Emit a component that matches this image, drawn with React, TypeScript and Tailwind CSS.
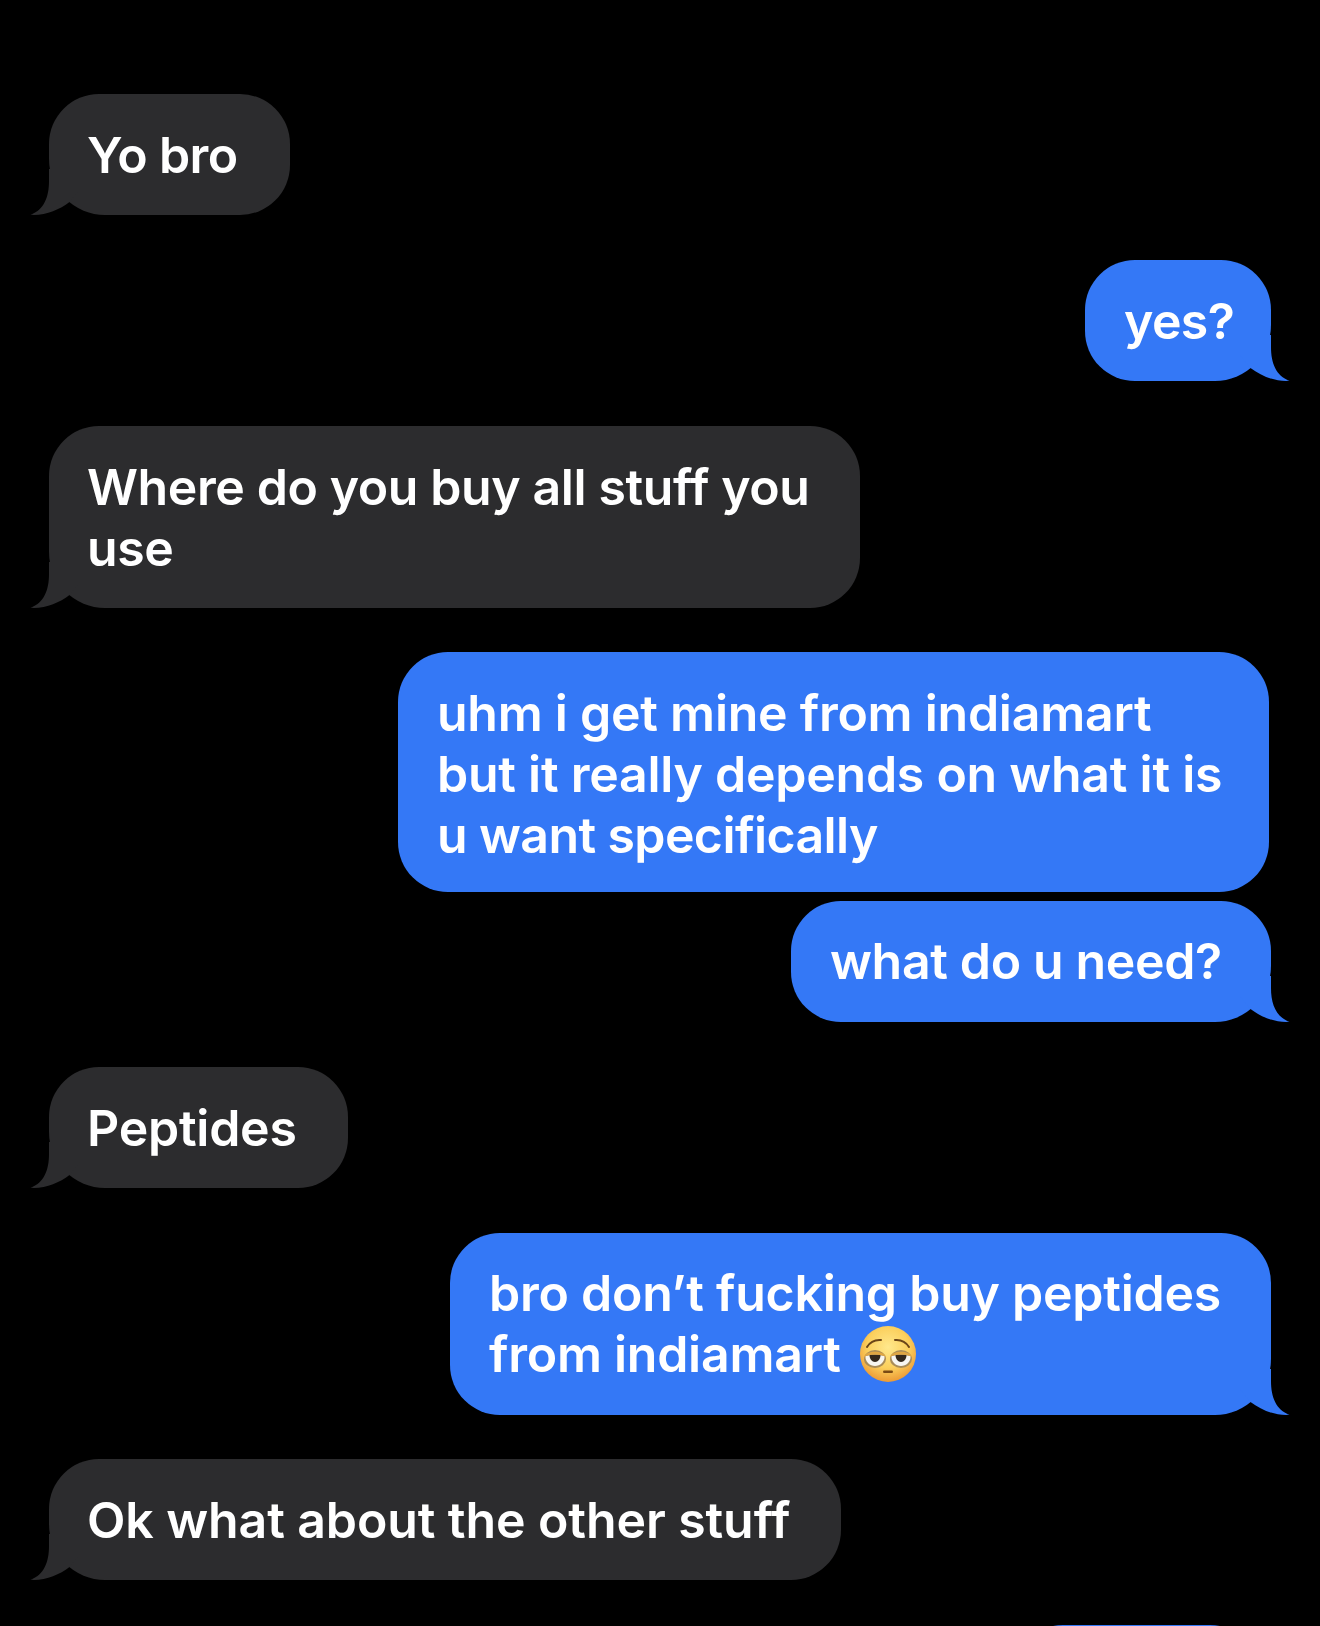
import React from 'react';

const Tail = ({ side, color }: { side: 'left' | 'right'; color: string }) => (
  <svg
    viewBox="0 0 50 46"
    className={side === 'left' ? 'absolute bottom-0 left-[-19px] w-[50px] h-[46px]' : 'absolute bottom-0 right-[-19px] w-[50px] h-[46px] -scale-x-100'}
  >
    <path d="M19 0 L19 12 C19 28 14 41 0.5 45.8 C15 46.8 29 41 39.5 33 L50 20 L50 0 Z" fill={color} />
  </svg>
);

// hand drawn, no emoji font in the sandbox
const FaceEmoji = () => (
  <svg viewBox="0 0 56 56" className="inline-block w-[56px] h-[56px] ml-[19px] align-[-10px]">
    <defs>
      <radialGradient id="face" cx="50%" cy="38%" r="62%">
        <stop offset="0%" stopColor="#ffe88c" />
        <stop offset="60%" stopColor="#fbcf5c" />
        <stop offset="100%" stopColor="#ec9a35" />
      </radialGradient>
    </defs>
    <circle cx="28" cy="28" r="28" fill="url(#face)" />
    <path d="M7 21 C10 16 15 13.5 21 14" fill="none" stroke="#6b4518" strokeWidth="2" strokeLinecap="round" />
    <path d="M49 21 C46 16 41 13.5 35 14" fill="none" stroke="#6b4518" strokeWidth="2" strokeLinecap="round" />
    <ellipse cx="15" cy="33" rx="11" ry="9" fill="#a98c58" />
    <ellipse cx="41" cy="33" rx="11" ry="9" fill="#a98c58" />
    <path d="M5.5 30 C9 28.5 21 28.5 24.5 30 C25 36 20 40 15 40 C10 40 5 36 5.5 30 Z" fill="#f8f6f0" />
    <path d="M31.5 30 C35 28.5 47 28.5 50.5 30 C51 36 46 40 41 40 C36 40 31 36 31.5 30 Z" fill="#f8f6f0" />
    <path d="M9.5 29 L20.5 29 C20.5 33 18 36 15 36 C12 36 9.5 33 9.5 29 Z" fill="#33281c" />
    <path d="M35.5 29 L46.5 29 C46.5 33 44 36 41 36 C38 36 35.5 33 35.5 29 Z" fill="#33281c" />
    <path d="M4 31 C6 24 24 24 26 31 C22 27.5 8 27.5 4 31 Z" fill="#e0a642" />
    <path d="M30 31 C32 24 50 24 52 31 C48 27.5 34 27.5 30 31 Z" fill="#e0a642" />
    <rect x="23" y="44.5" width="10" height="2.6" rx="1.3" fill="#7a4a14" />
  </svg>
);

const Bubble = ({ side, tail = true, className, children }: { side: 'left' | 'right'; tail?: boolean; className: string; children?: React.ReactNode }) => {
  const color = side === 'left' ? '#2c2c2e' : '#3478f6';
  return (
    <div className={`relative rounded-[50px] text-white whitespace-nowrap ${side === 'left' ? 'self-start ml-[49px] bg-[#2c2c2e] pl-[38px]' : 'self-end bg-[#3478f6] pl-[39px]'} ${tail && side === 'left' ? 'rounded-bl-[56px]' : ''} ${tail && side === 'right' ? 'rounded-br-[56px]' : ''} ${className}`}>
      {tail && <Tail side={side} color={color} />}
      <div className="relative">{children}</div>
    </div>
  );
};

export default function App() {
  return (
    <div className="h-[1626px] w-[1320px] overflow-hidden bg-black pt-[94px] flex flex-col font-['Inter',sans-serif] font-[560] text-[50px] leading-[61px] tracking-[-0.25px] [font-variant-ligatures:none]">
      <Bubble side="left" className="w-[241px] pt-[31px] pb-[29px] tracking-[-0.6px]">Yo bro</Bubble>
      <Bubble side="right" className="w-[186px] mr-[49px] mt-[45px] pt-[31px] pb-[29px] tracking-[-0.6px]">yes?</Bubble>
      <Bubble side="left" className="w-[811px] mt-[45px] pt-[31px] pb-[29px] tracking-[-0.4px]">Where do you buy all stuff you<br />use</Bubble>
      <Bubble side="right" tail={false} className="w-[871px] mr-[51px] mt-[44px] pt-[31px] pb-[26px]">uhm i get mine from indiamart<br />but it really depends on what it is<br /><span className="tracking-[-0.6px]">u want specifically</span></Bubble>
      <Bubble side="right" className="w-[480px] mr-[49px] mt-[9px] pt-[30px] pb-[30px] tracking-[-0.35px]">what do u need?</Bubble>
      <Bubble side="left" className="w-[299px] mt-[45px] pt-[31px] pb-[29px]">Peptides</Bubble>
      <Bubble side="right" className="w-[821px] mr-[49px] mt-[45px] pt-[30px] pb-[30px]">bro don’t fucking buy peptides<br />from indiamart<FaceEmoji /></Bubble>
      <Bubble side="left" className="w-[792px] mt-[44px] pt-[31px] pb-[29px] tracking-[-0.1px]">Ok what about the other stuff</Bubble>
      <Bubble side="right" tail={false} className="w-[247px] mr-[60px] h-[121px] mt-[45px] shrink-0" />
    </div>
  );
}
